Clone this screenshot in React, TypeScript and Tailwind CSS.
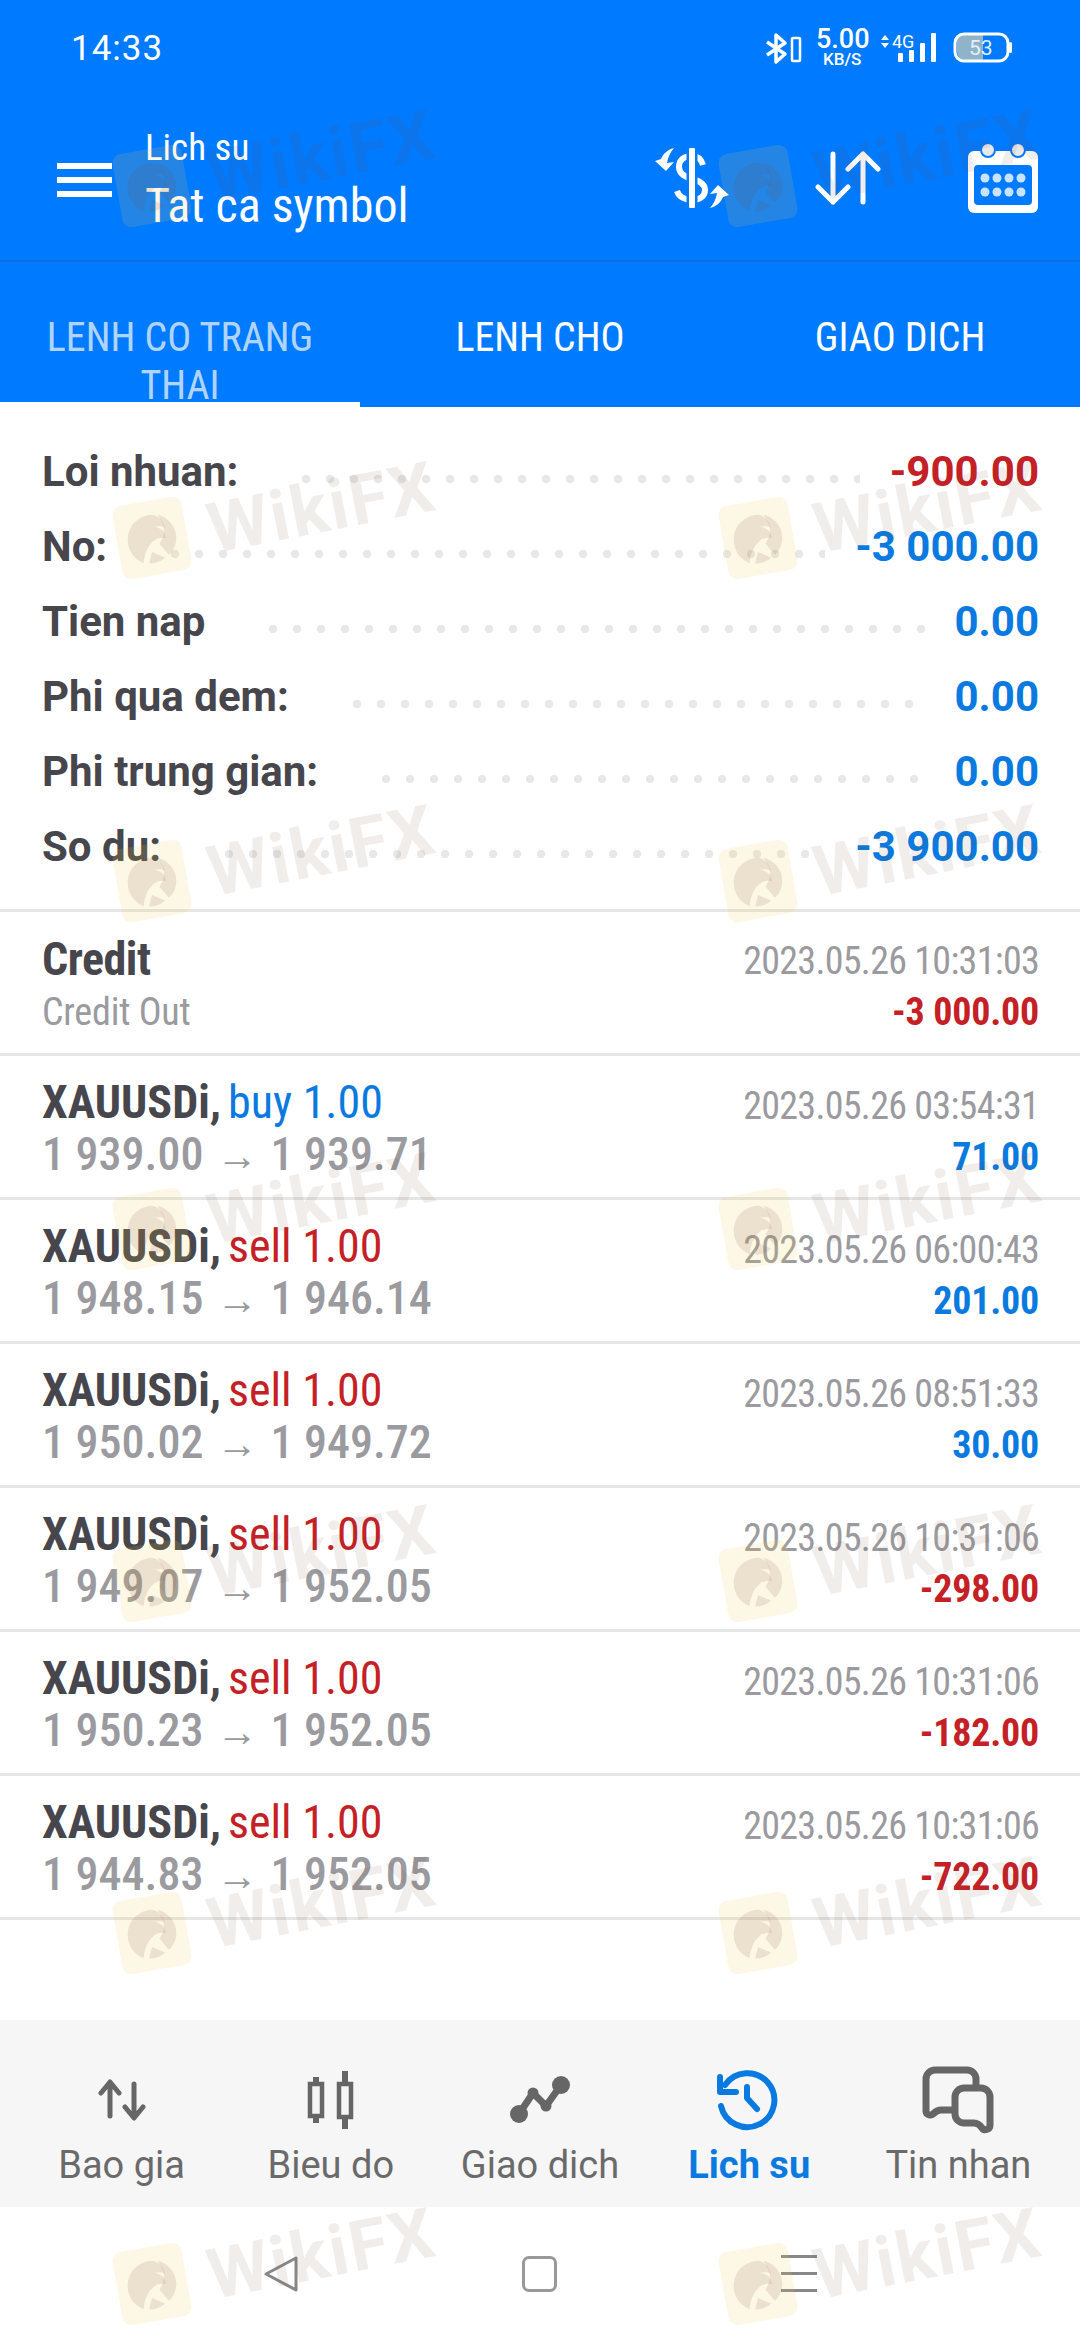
const summary = [
  { label: "Loi nhuan:", value: "-900.00", red: true },
  { label: "No:", value: "-3 000.00" },
  { label: "Tien nap", value: "0.00" },
  { label: "Phi qua dem:", value: "0.00" },
  { label: "Phi trung gian:", value: "0.00" },
  { label: "So du:", value: "-3 900.00" },
];

const deals = [
  { side: "buy", from: "1 939.00", to: "1 939.71", date: "2023.05.26 03:54:31", profit: "71.00" },
  { side: "sell", from: "1 948.15", to: "1 946.14", date: "2023.05.26 06:00:43", profit: "201.00" },
  { side: "sell", from: "1 950.02", to: "1 949.72", date: "2023.05.26 08:51:33", profit: "30.00" },
  { side: "sell", from: "1 949.07", to: "1 952.05", date: "2023.05.26 10:31:06", profit: "-298.00" },
  { side: "sell", from: "1 950.23", to: "1 952.05", date: "2023.05.26 10:31:06", profit: "-182.00" },
  { side: "sell", from: "1 944.83", to: "1 952.05", date: "2023.05.26 10:31:06", profit: "-722.00" },
];

const watermarkRows = [145, 497, 840, 1188, 1540, 1892, 2243];

const Watermark = ({ x, y }: { x: number; y: number }) => (
  <div className="absolute w-[330px] h-[90px]" style={{ left: x, top: y }}>
    <div className="absolute left-[4px] top-[4px] w-[70px] h-[74px] rounded-[9px] bg-[#f0c850]/15 -rotate-[10deg] flex items-center justify-center">
      <svg viewBox="0 0 60 60" className="w-[56px] h-[56px] rotate-[10deg]" fill="#78503c" fillOpacity="0.13">
        <path d="M30 5C14 6 4 18 4 32c0 12 7 21 17 25 1-10 4-18 11-24 3-3 8-4 13-3l-2-6c-3-4-6-5-11-6 5-1 8-1 12 1C42 12 37 6 30 5z" />
        <path d="M36 5c12 3 20 13 20 25 0 7-3 14-8 18L38 36c4-6 6-12 4-20z" />
        <path d="M27 57l3-12 14 6c-4 4-11 7-17 6z" />
      </svg>
    </div>
    <div className="absolute left-[102px] top-[-3px] h-[70px] font-['Roboto',sans-serif] font-bold text-[70px] leading-none tracking-[2px] text-[#78503c]/10 -rotate-[11deg] origin-bottom-left whitespace-nowrap">
      WikiFX
    </div>
  </div>
);

const StatusBar = () => (
  <div className="h-[96px] flex items-center justify-between pl-[71px] pr-[68px] text-white">
    <span className="text-[35px] tracking-[1px] pt-[2px]">14:33</span>
    <svg viewBox="0 0 246 36" className="w-[246px] h-[36px] overflow-visible" fill="none" stroke="#fff">
      <path d="M1 12l18 12-9 8V5l9 8L1 25" strokeWidth="3.5" strokeLinejoin="round" />
      <rect x="26" y="8" width="8" height="23" rx="1" strokeWidth="2.5" />
      <path d="M115 10l4-5 4 5zM115 13l4 5 4-5z" fill="#fff" stroke="none" />
      <rect x="132" y="23" width="5" height="9" rx="1" fill="#fff" stroke="none" />
      <rect x="143" y="20" width="5" height="12" rx="1" fill="#fff" stroke="none" />
      <rect x="154" y="13" width="5" height="19" rx="1" fill="#fff" stroke="none" />
      <rect x="165" y="3" width="5" height="29" rx="1" fill="#fff" stroke="none" />
      <path d="M192 5h25v25h-18a8 8 0 0 1-8-8V11a6 6 0 0 1 1-6z" fill="#8fb3c9" stroke="none" />
      <rect x="189" y="4" width="53" height="27" rx="9" strokeWidth="3" />
      <rect x="243" y="12" width="3" height="11" rx="1.5" fill="#fff" stroke="none" />
      <text x="50" y="18" fill="#fff" stroke="none" fontSize="27" fontWeight="500" fontFamily="Roboto">5.00</text>
      <text x="57" y="35" fill="#fff" stroke="none" fontSize="17" fontWeight="500" fontFamily="Roboto">KB/S</text>
      <text x="126" y="18" fill="#fff" stroke="none" fontSize="18" fontFamily="Roboto">4G</text>
      <text x="203" y="25" fill="#e4f0f8" stroke="none" fontSize="21" fontFamily="Roboto">53</text>
    </svg>
  </div>
);

const ActionIcons = () => (
  <div className="flex items-center">
    <svg viewBox="0 0 74 60" className="w-[74px] h-[60px] mr-[86px]" fill="none">
      <path d="M48 17c-2-7-6-9-11-9-8 0-13 4-13 11s6 10 13 12c8 2 13 5 13 11 0 7-6 10-13 10-7 0-13-3-15-9" stroke="#fff" strokeWidth="6" />
      <path d="M37 0v60" stroke="#007aff" strokeWidth="11" />
      <path d="M37 2v56" stroke="#fff" strokeWidth="6" strokeLinecap="round" />
      <path d="M19 0C12 2 8 6 6 11L0 13l11 10 8-9-7 1c1-6 3-10 7-15z" fill="#fff" />
      <path d="M19 0C12 2 8 6 6 11L0 13l11 10 8-9-7 1c1-6 3-10 7-15z" fill="#fff" transform="rotate(180 37 30)" />
    </svg>
    <svg viewBox="0 0 66 54" className="w-[66px] h-[54px] mr-[87px]" fill="none" stroke="#fff" strokeWidth="5" strokeLinecap="round" strokeLinejoin="round">
      <path d="M18 3v48M3 36l15 15 15-15" />
      <path d="M48 51V3M33 18L48 3l15 15" />
    </svg>
    <svg viewBox="0 0 70 70" className="w-[70px] h-[70px]">
      <path d="M6 8h58a6 6 0 0 1 6 6v50a6 6 0 0 1-6 6H6a6 6 0 0 1-6-6V14a6 6 0 0 1 6-6z" fill="#fff" />
      <path d="M10 22h50a4 4 0 0 1 4 4v32a4 4 0 0 1-4 4H10a4 4 0 0 1-4-4V26a4 4 0 0 1 4-4z" fill="#007aff" />
      <circle cx="20" cy="7" r="7" fill="#e8e8e8" stroke="#007aff" strokeWidth="2" />
      <circle cx="50" cy="7" r="7" fill="#e8e8e8" stroke="#007aff" strokeWidth="2" />
      {[17, 29, 41, 53].map((cx) => (
        <g key={cx}>
          <circle cx={cx} cy="35" r="4.5" fill="#c9e3ff" />
          <circle cx={cx} cy="49" r="4.5" fill="#c9e3ff" />
        </g>
      ))}
    </svg>
  </div>
);

const Header = () => (
  <div className="bg-[#007aff] text-white">
    <StatusBar />
    <div className="h-[166px] flex items-center pl-[57px] pr-[42px] border-b-2 border-[#0a6ee0]">
      <div className="flex flex-col gap-[8px] w-[55px] mr-[33px] mt-[4px]">
        <div className="h-[6px] bg-white" />
        <div className="h-[6px] bg-white" />
        <div className="h-[6px] bg-white" />
      </div>
      <div className="flex flex-col flex-1 pt-[12px]">
        <span className="text-[37px] leading-[42px] mt-[-4px] [font-stretch:75%]">Lich su</span>
        <span className="text-[48px] leading-[64px] mt-[5px] [font-stretch:75%]">Tat ca symbol</span>
      </div>
      <ActionIcons />
    </div>
    <div className="h-[145px] grid grid-cols-3 text-[40px] leading-[48px] text-center">
      <div className="relative overflow-hidden pt-[52px] text-white/70 px-[40px] [font-stretch:75%]">
        LENH CO TRANG THAI
        <div className="absolute left-0 right-0 bottom-0 h-[5px] bg-white" />
      </div>
      <div className="pt-[52px] [font-stretch:75%]">LENH CHO</div>
      <div className="pt-[52px] [font-stretch:75%]">GIAO DICH</div>
    </div>
  </div>
);

const Summary = () => (
  <div className="h-[505px] pt-[27px] pl-[42px] pr-[41px] border-b-[3px] border-[#e6e6e6]">
    {summary.map((row) => (
      <div key={row.label} className="h-[75px] flex items-center text-[42px] font-bold">
        <span className="text-[#46464c]">{row.label}</span>
        <div className="flex-1 h-[8px] mt-[14px] ml-[56px] mr-[30px] bg-[radial-gradient(circle,#e8e8e8_4px,transparent_4.5px)] bg-[length:24px_8px]" />
        <span className={row.red ? "text-[#c42026]" : "text-[#0a7ae0]"}>{row.value}</span>
      </div>
    ))}
  </div>
);

const CreditRow = () => (
  <div className="h-[144px] pl-[42px] pr-[41px] flex justify-between border-b-[3px] border-[#e6e6e6] pt-[20px]">
    <div className="flex flex-col">
      <span className="text-[46px] leading-[54px] font-bold tracking-[-0.5px] text-[#46464c] [font-stretch:75%]">Credit</span>
      <span className="text-[38px] leading-[46px] mt-[3px] text-[#9a9a9f] tracking-[-0.2px] [font-stretch:75%]">Credit Out</span>
    </div>
    <div className="flex flex-col items-end pt-[4px]">
      <span className="text-[38px] leading-[50px] tracking-[-0.7px] text-[#9a9a9f] [font-stretch:75%]">2023.05.26 10:31:03</span>
      <span className="text-[38px] leading-[50px] mt-[1px] font-bold tracking-[-0.2px] text-[#c42026] [font-stretch:75%]">-3 000.00</span>
    </div>
  </div>
);

const DealRow = ({ deal }: { deal: (typeof deals)[number] }) => {
  const loss = deal.profit.startsWith("-");
  return (
    <div className="h-[144px] pl-[42px] pr-[41px] flex justify-between border-b-[3px] border-[#e6e6e6] pt-[21px]">
      <div className="flex flex-col text-[46px] leading-[50px] [font-stretch:75%]">
        <span className="font-bold text-[#46464c]">
          XAUUSDi,
          <span className={`font-normal ml-[7px] ${deal.side === "buy" ? "text-[#0a7ae0]" : "text-[#c42026]"}`}>{deal.side} 1.00</span>
        </span>
        <span className="flex items-center font-medium text-[#9a9a9f]">
          {deal.from}
          <span className="w-[67px] text-center text-[42px] leading-[50px] pt-[4px] [font-stretch:100%]">→</span>
          {deal.to}
        </span>
      </div>
      <div className="flex flex-col items-end pt-[4px]">
        <span className="text-[38px] leading-[50px] tracking-[-0.7px] text-[#9a9a9f] [font-stretch:75%]">{deal.date}</span>
        <span className={`text-[38px] leading-[50px] mt-[1px] font-bold tracking-[-0.2px] [font-stretch:75%] ${loss ? "text-[#c42026]" : "text-[#0a7ae0]"}`}>{deal.profit}</span>
      </div>
    </div>
  );
};

const NavItem = ({ label, active, children }: { label: string; active?: boolean; children: React.ReactNode }) => (
  <div className="flex flex-col items-center">
    <div className="h-[72px] flex items-center justify-center">{children}</div>
    <span className={`mt-[7px] text-[38px] leading-[44px] ${active ? "font-bold text-[#0a7ae0]" : "text-[#6a6a6a]"}`}>{label}</span>
  </div>
);

const BottomNav = () => (
  <div className="h-[187px] bg-[#f6f6f6] px-[17px] pt-[44px] grid grid-cols-5">
    <NavItem label="Bao gia">
      <svg viewBox="0 0 48 42" className="w-[48px] h-[42px]" fill="none" stroke="#666" strokeWidth="5" strokeLinecap="round" strokeLinejoin="round">
        <path d="M12 37V4M3 14l9-11 9 11" />
        <path d="M36 5v33M27 28l9 11 9-11" />
      </svg>
    </NavItem>
    <NavItem label="Bieu do">
      <svg viewBox="0 0 48 58" className="w-[48px] h-[58px]" fill="none" stroke="#666" strokeWidth="4.5">
        <path d="M9 6v46M38 0v58" strokeWidth="6" />
        <rect x="3" y="13" width="12" height="32" fill="#f6f6f6" />
        <rect x="32" y="13" width="12" height="33" fill="#f6f6f6" />
      </svg>
    </NavItem>
    <NavItem label="Giao dich">
      <svg viewBox="0 0 62 50" className="w-[62px] h-[50px]" fill="#666" stroke="#666" strokeWidth="7" strokeLinejoin="round">
        <path d="M10 39L24 18l13 13L52 10" fill="none" />
        <circle cx="10" cy="39" r="9" stroke="none" />
        <circle cx="52" cy="10" r="9" stroke="none" />
        <circle cx="24" cy="18" r="5.5" stroke="none" />
        <circle cx="37" cy="31" r="5.5" stroke="none" />
      </svg>
    </NavItem>
    <NavItem label="Lich su" active>
      <svg viewBox="0 0 64 64" className="w-[64px] h-[64px]" fill="none" stroke="#0a7ae0" strokeWidth="6" strokeLinecap="round" strokeLinejoin="round">
        <path d="M8 17A27 27 0 1 1 4 38" />
        <path d="M3 9V24H19" />
        <path d="M30 19V30L40 41" />
      </svg>
    </NavItem>
    <NavItem label="Tin nhan">
      <svg viewBox="0 0 74 70" className="w-[74px] h-[70px]" fill="none" stroke="#666" strokeWidth="7" strokeLinejoin="round">
        <path d="M55 23V14a9 9 0 0 0-9-9H14a9 9 0 0 0-9 9v32c0 4 5 5 7 3 2-2 4-4 8-4h13" />
        <path d="M43 23h17a9 9 0 0 1 9 9v28c0 5-6 6-8 3-2-3-4-5-8-5H43a9 9 0 0 1-9-9V32a9 9 0 0 1 9-9z" />
      </svg>
    </NavItem>
  </div>
);

const SystemNav = () => (
  <div className="flex-1 bg-white">
    <div className="h-full grid grid-cols-3 px-[151px] items-center">
      <svg viewBox="0 0 34 36" className="w-[34px] h-[36px] justify-self-center" fill="none" stroke="#888" strokeWidth="3" strokeLinejoin="round">
        <path d="M32 2v32L2 18z" />
      </svg>
      <div className="w-[35px] h-[36px] rounded-[7px] border-[3px] border-[#999] justify-self-center" />
      <div className="w-[36px] flex flex-col gap-[14px] justify-self-center">
        <div className="h-[3px] bg-[#888]" />
        <div className="h-[3px] bg-[#888]" />
        <div className="h-[3px] bg-[#888]" />
      </div>
    </div>
  </div>
);

export default function App() {
  return (
    <div className="relative w-[1080px] h-[2340px] overflow-hidden bg-white flex flex-col font-['Roboto',sans-serif]">
      <Header />
      <Summary />
      <CreditRow />
      {deals.map((deal, i) => (
        <DealRow key={i} deal={deal} />
      ))}
      <div className="h-[100px]" />
      <BottomNav />
      <SystemNav />
      <div className="absolute inset-0 pointer-events-none">
        {watermarkRows.map((y) => (
          <div key={y}>
            <Watermark x={113} y={y} />
            <Watermark x={719} y={y} />
          </div>
        ))}
      </div>
    </div>
  );
}
